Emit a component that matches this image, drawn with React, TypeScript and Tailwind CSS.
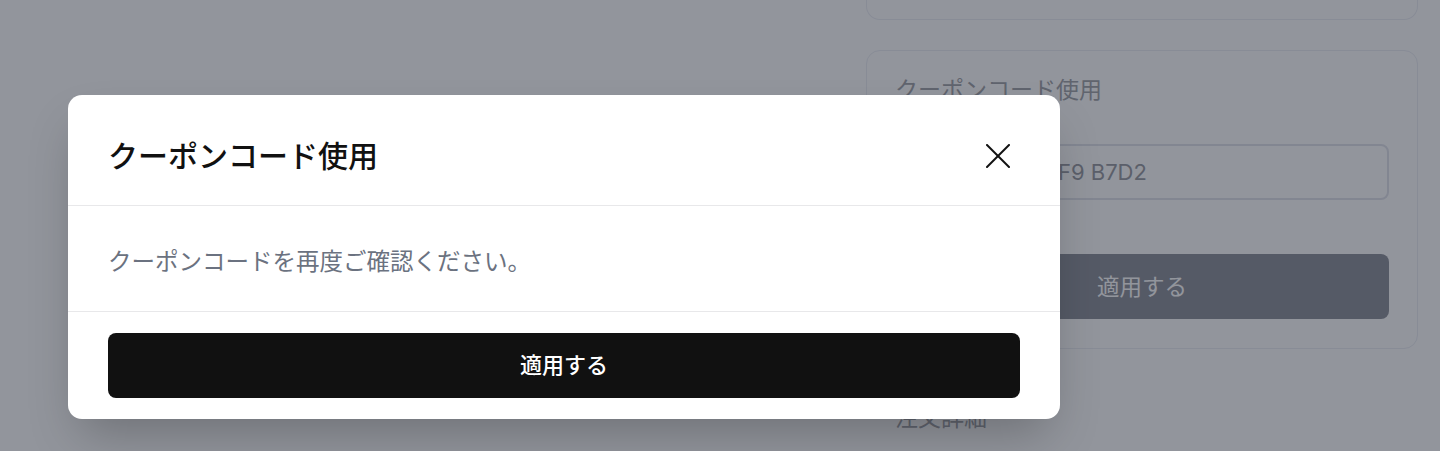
import { useState } from "react";

const FONT = { fontFamily: 'Inter, "Noto Sans CJK JP", "Noto Sans", sans-serif' };

function CloseIcon() {
  return (
    <svg width="24" height="24" viewBox="0 0 24 24" fill="none" stroke="currentColor" strokeWidth="2" strokeLinecap="round">
      <path d="M1 1L23 23" />
      <path d="M23 1L1 23" />
    </svg>
  );
}

// the checkout sidebar behind the dialog
function OrderSidebar() {
  return (
    <aside className="ml-auto mr-[22px] flex w-[552px] flex-col">
      <div className="h-[20px] rounded-b-[14px] border-x border-b border-[#eceef4]" />

      <section className="mt-[30px] rounded-[14px] border border-[#eceef4] px-7 pt-[23px] pb-[29px]">
        <h3 className="text-[23px] leading-8 text-[#a3a5aa]">クーポンコード使用</h3>
        <div className="mt-[38px] flex h-[56px] items-center rounded-lg border-2 border-[#e2e3eb] pl-[11px]">
          <span className="text-[22px] text-[#9a9ca3]">2E4A 9C1D 58F9 B7D2</span>
        </div>
        <button className="mt-[54px] flex h-[65px] w-full items-center justify-center rounded-lg bg-[#8f929c] text-[22.5px] text-white">
          適用する
        </button>
      </section>

      <h3 className="mt-[53px] px-[29px] text-[23px] leading-8 text-[#a3a5aa]">注文詳細</h3>
    </aside>
  );
}

function CouponDialog({ onClose }: { onClose: () => void }) {
  return (
    <div className="absolute left-[68px] top-[95px] w-[992px] overflow-hidden rounded-[14px] bg-white shadow-2xl">
      <div className="flex h-[111px] items-center justify-between border-b border-[#e8e8ea] pt-3 pl-10 pr-[50px]">
        <h2 className="text-[30px] font-medium leading-10 text-[#111111]">クーポンコード使用</h2>
        <button onClick={onClose} className="text-[#111111]">
          <CloseIcon />
        </button>
      </div>
      <div className="border-b border-[#e8e8ea] px-10 pt-[38px] pb-[31px]">
        <p className="text-[23.5px] leading-9 text-[#6b7280]">クーポンコードを再度ご確認ください。</p>
      </div>
      <div className="px-10 pt-[21px] pb-[21px]">
        <button className="flex h-[65px] w-full items-center justify-center rounded-lg bg-[#111111] text-[22px] font-medium text-white">
          適用する
        </button>
      </div>
    </div>
  );
}

export default function App() {
  const [open, setOpen] = useState(true);

  return (
    <div className="relative h-[451px] w-full overflow-hidden bg-white" style={FONT}>
      <div className="flex">
        <main className="flex-1" />
        <OrderSidebar />
      </div>

      {open && (
        <div className="absolute inset-0 bg-[#111827]/[0.46]">
          <CouponDialog onClose={() => setOpen(false)} />
        </div>
      )}
    </div>
  );
}
